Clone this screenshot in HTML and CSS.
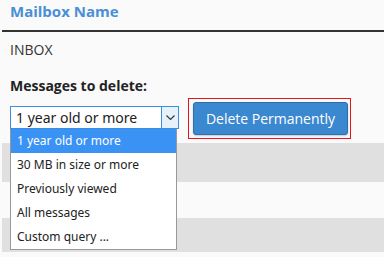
FILE: index.html
```html
<!DOCTYPE html>
<html lang="en">
<head>
    <meta charset="UTF-8">
    <meta name="viewport" content="width=device-width, initial-scale=1.0">
    <title>Delete Messages</title>
    <link rel="stylesheet" href="styles.css">
</head>
<body>
    <div class="table">
        <div class="head">Mailbox Name</div>
        <div class="row">INBOX</div>
        <div class="form-row">
            <label class="label">Messages to delete:</label>
            <div class="controls">
                <div class="select">
                    <span class="select-value">1 year old or more</span>
                    <span class="select-arrow">
                        <svg width="9" height="5" viewBox="0 0 9 5"><polyline points="0.5,0.5 4.5,4.5 8.5,0.5" fill="none" stroke="#333" stroke-width="1.1"/></svg>
                    </span>
                    <ul class="options">
                        <li class="active">1 year old or more</li>
                        <li>30 MB in size or more</li>
                        <li>Previously viewed</li>
                        <li>All messages</li>
                        <li>Custom query ...</li>
                    </ul>
                </div>
                <div class="focus-box">
                    <button type="button" class="btn">Delete Permanently</button>
                </div>
            </div>
        </div>
        <div class="stripe dark"></div>
        <div class="stripe light"></div>
        <div class="stripe dark short"></div>
    </div>
</body>
</html>
```

FILE: styles.css
```css
body {
    font-family: "Open Sans", Arial, sans-serif;
    background-color: #fafafa;
    color: #333;
    margin: 0;
    padding: 0;
}
.table {
    margin-left: 2px;
}
.head {
    font-size: 15px;
    font-weight: bold;
    line-height: 20px;
    color: #4a8fd6;
    padding: 1px 8px 9px;
    border-bottom: 2px solid #333;
}
.row {
    font-size: 14px;
    line-height: 20px;
    padding: 8px 8px 8px;
}
.form-row {
    padding: 8px 8px 4px;
}
.label {
    display: block;
    font-size: 14px;
    font-weight: bold;
    line-height: 20px;
    color: #222;
}
.controls {
    display: flex;
    align-items: flex-start;
    gap: 9px;
    margin-top: 2px;
}
.select {
    position: relative;
    display: flex;
    width: 169px;
    height: 23px;
    margin-top: 8px;
    box-sizing: border-box;
    border: 1px solid #3b8fdc;
    background-color: #fff;
    font-family: "Noto Sans", "Open Sans", sans-serif;
}
.select-value {
    flex: 1;
    font-size: 14px;
    line-height: 21px;
    padding-left: 5px;
    color: #222;
}
.select-arrow {
    width: 16px;
    border-left: 1px solid #3b8fdc;
    background-color: #e5f1fb;
    display: flex;
    align-items: center;
    justify-content: center;
}
.options {
    position: absolute;
    top: 22px;
    left: -1px;
    width: 167px;
    margin: 0;
    padding: 0;
    list-style: none;
    box-sizing: border-box;
    background-color: #fff;
    border: 1px solid #999;
    border-top: none;
    z-index: 2;
}
.options li {
    height: 24px;
    line-height: 23px;
    padding-left: 6px;
    font-size: 12px;
    color: #222;
}
.options li.active {
    background-color: #3a92f5;
    color: #fff;
}
.focus-box {
    border: 1px solid #e8121c;
    padding: 3px 2px 3px 4px;
}
.btn {
    font-family: "Open Sans", Arial, sans-serif;
    background-color: #3a88cf;
    color: #fff;
    border: 1px solid #2d6fae;
    border-radius: 3px;
    width: 155px;
    height: 33px;
    font-size: 14px;
    padding: 0;
    box-shadow: 0 1px 2px rgba(0, 0, 0, 0.2);
    cursor: pointer;
}
.btn:hover {
    background-color: #2f79bd;
}
.stripe {
    height: 39px;
}
.stripe.dark {
    background-color: #e0e0e0;
}
.stripe.light {
    height: 36px;
    background-color: #fafafa;
}
.stripe.short {
    height: 34px;
}
```
